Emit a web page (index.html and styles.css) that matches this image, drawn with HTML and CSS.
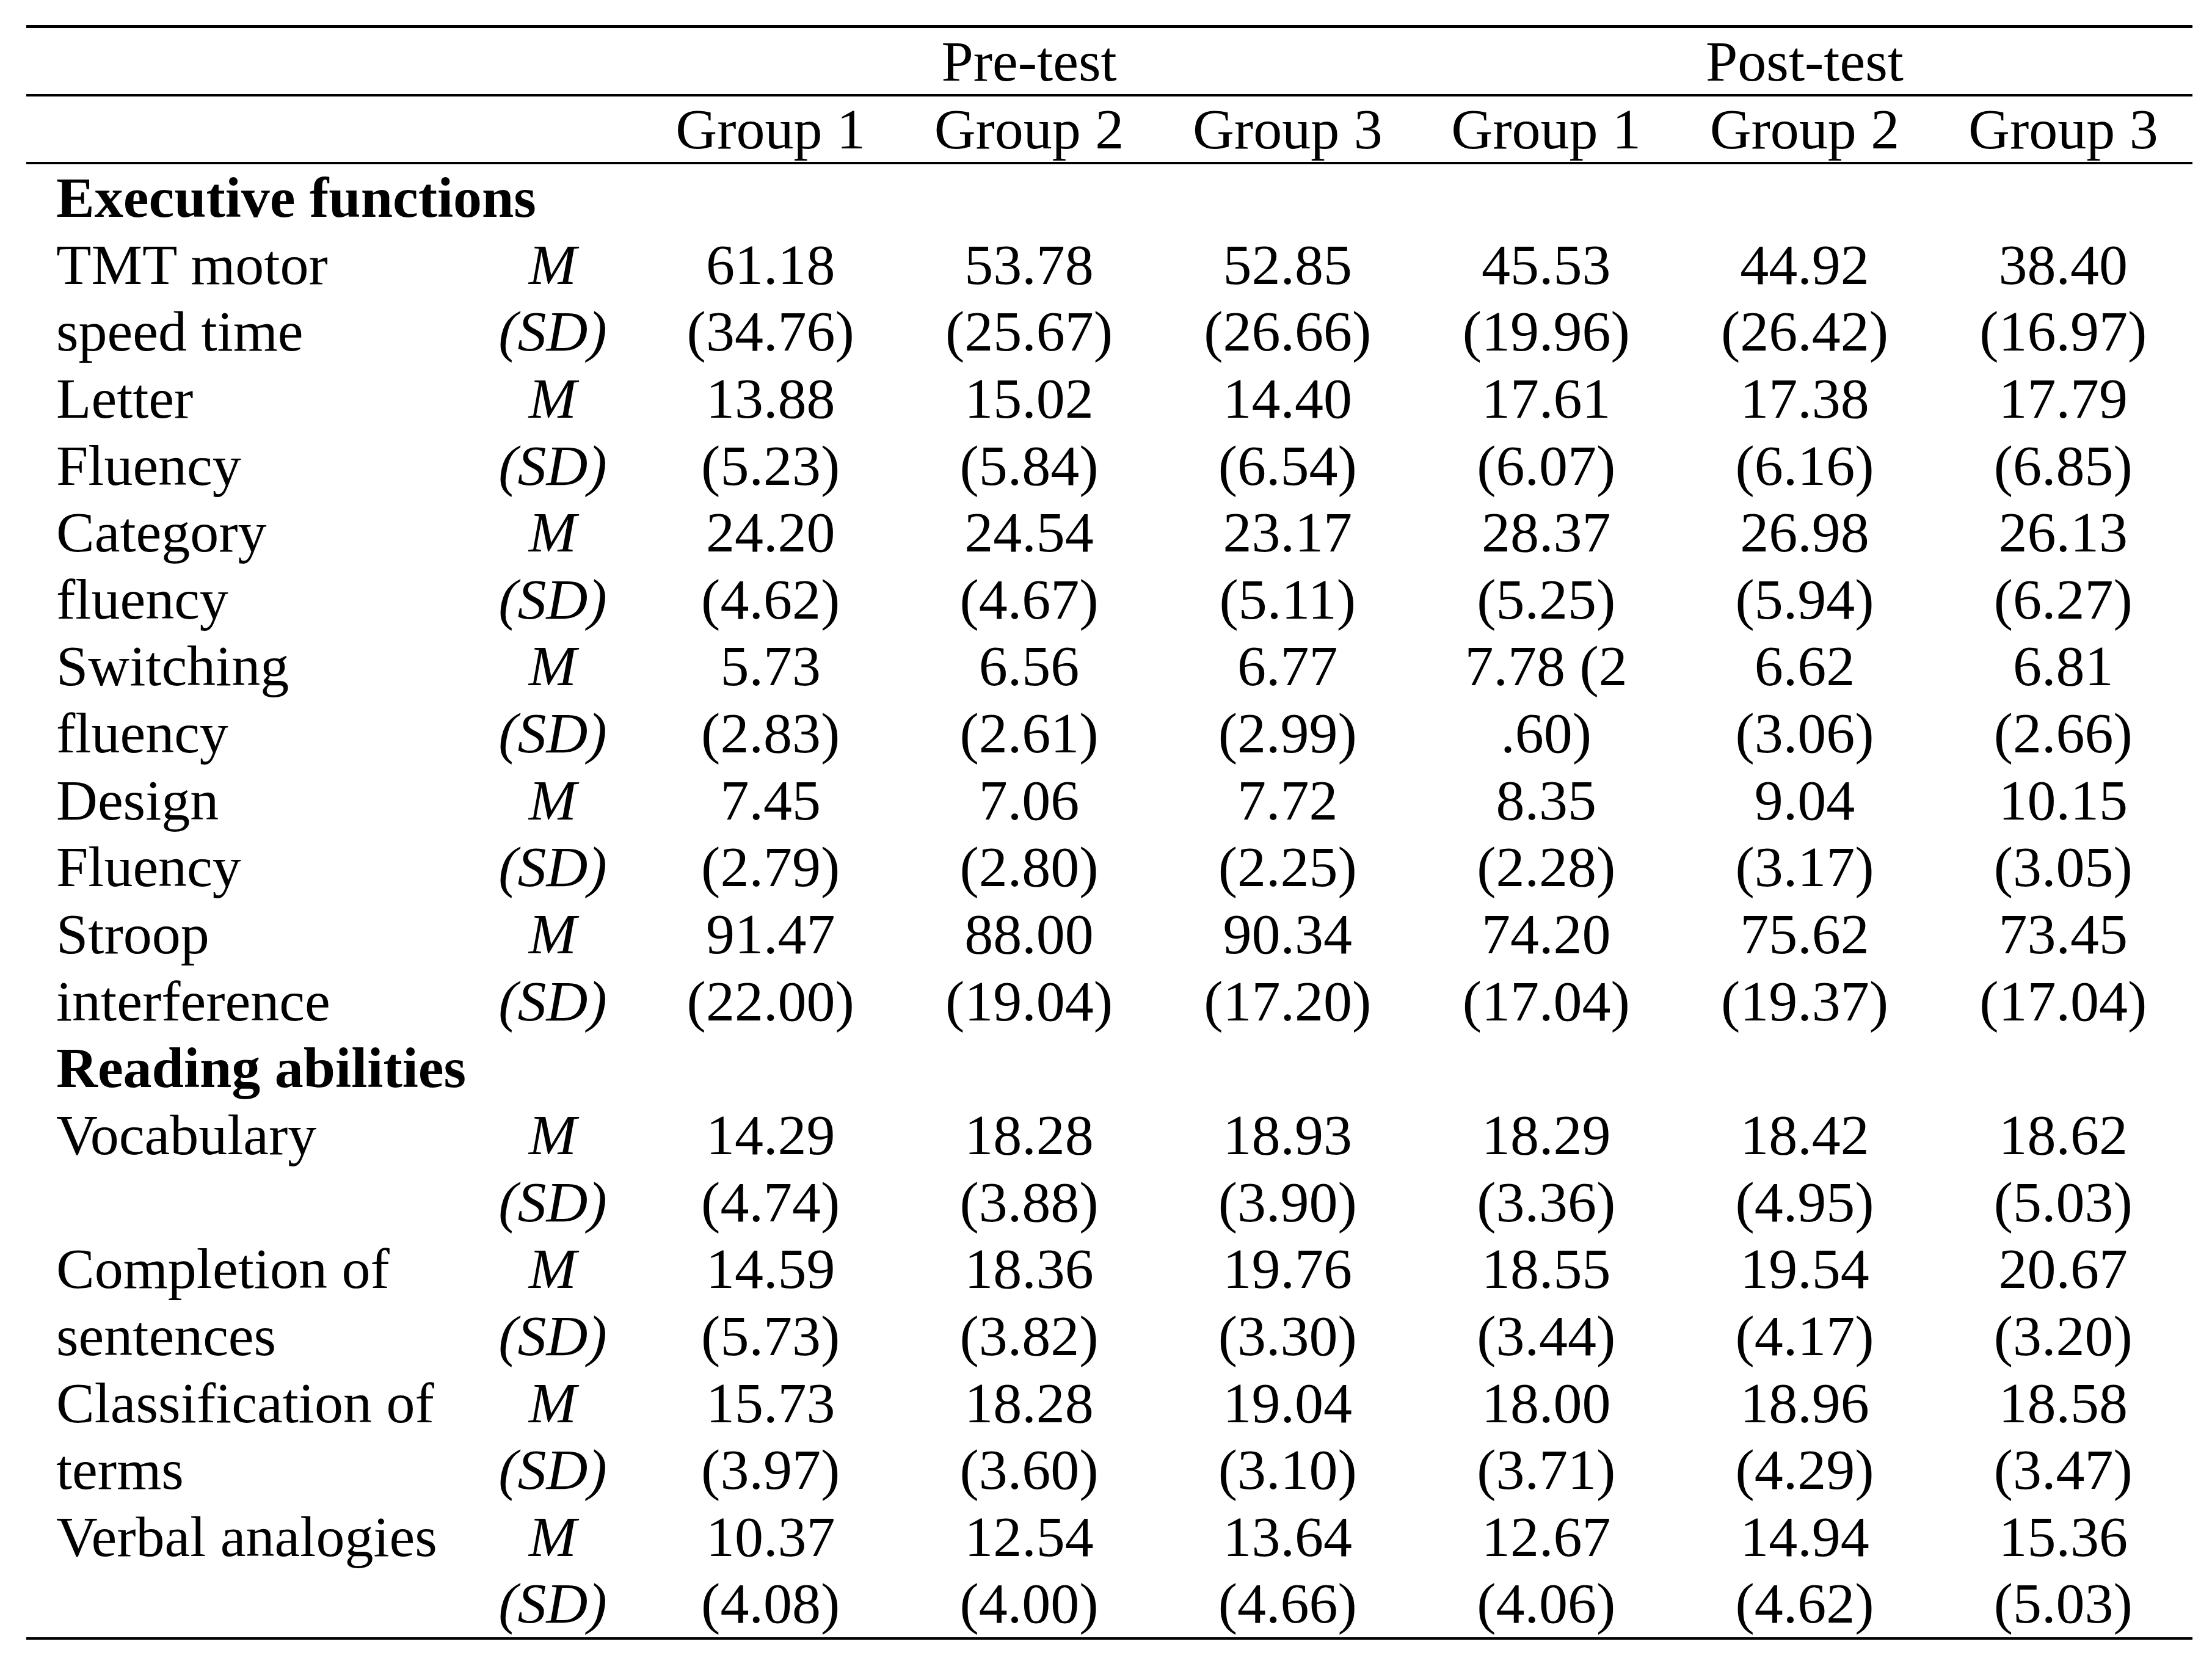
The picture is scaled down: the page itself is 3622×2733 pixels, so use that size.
FILE: index.html
```html
<!DOCTYPE html>
<html lang="en">
<head>
<meta charset="utf-8">
<title>Descriptive statistics</title>
<link rel="stylesheet" href="styles.css">
</head>
<body>
<table class="stats">
  <colgroup>
    <col class="c-label">
    <col class="c-stat">
    <col class="c-val"><col class="c-val"><col class="c-val">
    <col class="c-val"><col class="c-val"><col class="c-val">
  </colgroup>
  <thead>
    <tr class="phase-row">
      <th></th><th></th>
      <th colspan="3">Pre-test</th>
      <th colspan="3">Post-test</th>
    </tr>
    <tr class="group-row">
      <th></th><th></th>
      <th>Group 1</th><th>Group 2</th><th>Group 3</th>
      <th>Group 1</th><th>Group 2</th><th>Group 3</th>
    </tr>
  </thead>
  <tbody>
    <tr class="section"><td colspan="8">Executive functions</td></tr>
    <tr><td class="label">TMT motor</td><td class="stat">M</td><td>61.18</td><td>53.78</td><td>52.85</td><td>45.53</td><td>44.92</td><td>38.40</td></tr>
    <tr><td class="label">speed time</td><td class="stat">(SD)</td><td>(34.76)</td><td>(25.67)</td><td>(26.66)</td><td>(19.96)</td><td>(26.42)</td><td>(16.97)</td></tr>
    <tr><td class="label">Letter</td><td class="stat">M</td><td>13.88</td><td>15.02</td><td>14.40</td><td>17.61</td><td>17.38</td><td>17.79</td></tr>
    <tr><td class="label">Fluency</td><td class="stat">(SD)</td><td>(5.23)</td><td>(5.84)</td><td>(6.54)</td><td>(6.07)</td><td>(6.16)</td><td>(6.85)</td></tr>
    <tr><td class="label">Category</td><td class="stat">M</td><td>24.20</td><td>24.54</td><td>23.17</td><td>28.37</td><td>26.98</td><td>26.13</td></tr>
    <tr><td class="label">fluency</td><td class="stat">(SD)</td><td>(4.62)</td><td>(4.67)</td><td>(5.11)</td><td>(5.25)</td><td>(5.94)</td><td>(6.27)</td></tr>
    <tr><td class="label">Switching</td><td class="stat">M</td><td>5.73</td><td>6.56</td><td>6.77</td><td>7.78 (2</td><td>6.62</td><td>6.81</td></tr>
    <tr><td class="label">fluency</td><td class="stat">(SD)</td><td>(2.83)</td><td>(2.61)</td><td>(2.99)</td><td>.60)</td><td>(3.06)</td><td>(2.66)</td></tr>
    <tr><td class="label">Design</td><td class="stat">M</td><td>7.45</td><td>7.06</td><td>7.72</td><td>8.35</td><td>9.04</td><td>10.15</td></tr>
    <tr><td class="label">Fluency</td><td class="stat">(SD)</td><td>(2.79)</td><td>(2.80)</td><td>(2.25)</td><td>(2.28)</td><td>(3.17)</td><td>(3.05)</td></tr>
    <tr><td class="label">Stroop</td><td class="stat">M</td><td>91.47</td><td>88.00</td><td>90.34</td><td>74.20</td><td>75.62</td><td>73.45</td></tr>
    <tr><td class="label">interference</td><td class="stat">(SD)</td><td>(22.00)</td><td>(19.04)</td><td>(17.20)</td><td>(17.04)</td><td>(19.37)</td><td>(17.04)</td></tr>
    <tr class="section"><td colspan="8">Reading abilities</td></tr>
    <tr><td class="label">Vocabulary</td><td class="stat">M</td><td>14.29</td><td>18.28</td><td>18.93</td><td>18.29</td><td>18.42</td><td>18.62</td></tr>
    <tr><td class="label"></td><td class="stat">(SD)</td><td>(4.74)</td><td>(3.88)</td><td>(3.90)</td><td>(3.36)</td><td>(4.95)</td><td>(5.03)</td></tr>
    <tr><td class="label">Completion of</td><td class="stat">M</td><td>14.59</td><td>18.36</td><td>19.76</td><td>18.55</td><td>19.54</td><td>20.67</td></tr>
    <tr><td class="label">sentences</td><td class="stat">(SD)</td><td>(5.73)</td><td>(3.82)</td><td>(3.30)</td><td>(3.44)</td><td>(4.17)</td><td>(3.20)</td></tr>
    <tr><td class="label">Classification of</td><td class="stat">M</td><td>15.73</td><td>18.28</td><td>19.04</td><td>18.00</td><td>18.96</td><td>18.58</td></tr>
    <tr><td class="label">terms</td><td class="stat">(SD)</td><td>(3.97)</td><td>(3.60)</td><td>(3.10)</td><td>(3.71)</td><td>(4.29)</td><td>(3.47)</td></tr>
    <tr><td class="label">Verbal analogies</td><td class="stat">M</td><td>10.37</td><td>12.54</td><td>13.64</td><td>12.67</td><td>14.94</td><td>15.36</td></tr>
    <tr class="last"><td class="label"></td><td class="stat">(SD)</td><td>(4.08)</td><td>(4.00)</td><td>(4.66)</td><td>(4.06)</td><td>(4.62)</td><td>(5.03)</td></tr>
  </tbody>
</table>
</body>
</html>
```
FILE: styles.css
```css
html, body {
  margin: 0;
  padding: 0;
  background: #ffffff;
}

body {
  padding: 41px 0 0 43px;
  font-family: "Liberation Serif", "Times New Roman", serif;
  font-size: 94px;
  color: #000000;
}

.stats {
  border-collapse: separate;
  border-spacing: 0;
  table-layout: fixed;
  width: 3547px;
}

.c-label { width: 717px; }
.c-stat { width: 290px; }
.c-val { width: 423.33px; }

.stats th,
.stats td {
  padding: 0;
  font-weight: normal;
  text-align: center;
  white-space: nowrap;
  vertical-align: top;
  line-height: 109.636px;
}

.phase-row th {
  border-top: 5px solid #000;
  border-bottom: 4px solid #000;
  line-height: 108px;
}

.group-row th {
  border-bottom: 4px solid #000;
  line-height: 107px;
}

.stats td.label {
  text-align: left;
  padding-left: 49px;
}

.stats td.stat {
  font-style: italic;
}

.section td {
  text-align: left;
  padding-left: 49px;
  font-weight: bold;
}

.last td {
  border-bottom: 4px solid #000;
}
```
